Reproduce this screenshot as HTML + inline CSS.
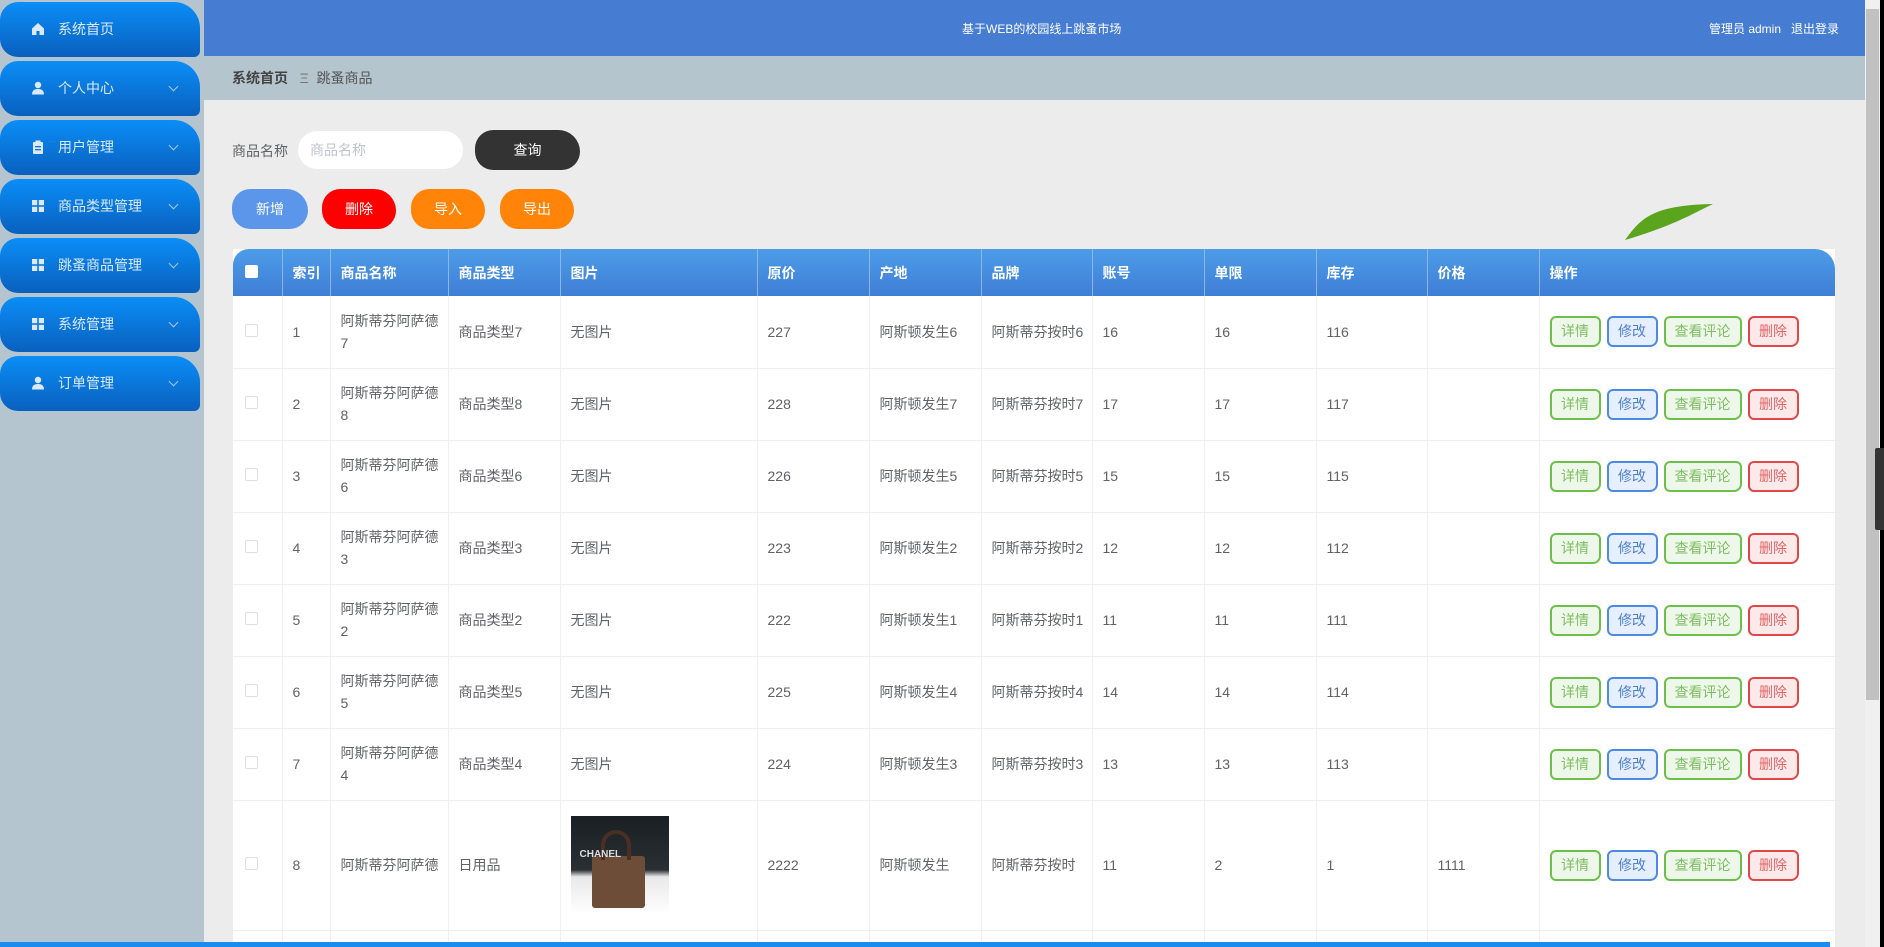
<!DOCTYPE html>
<html style="width:1884px;height:947px;overflow:hidden"><head><meta charset="utf-8"><style>
*{box-sizing:border-box;margin:0;padding:0}
body{width:1884px;height:947px;overflow:hidden;position:relative;background:#ececec;font-family:"Liberation Sans","Noto Sans CJK SC",sans-serif;font-size:14px;color:#606266}
.side{position:absolute;left:0;top:0;width:204px;height:947px;background:#b5c5cf}
.it{position:absolute;left:0;width:200px;height:55px;border-radius:18px 26px 6px 18px;background:linear-gradient(#0a8ef7,#0a60be);color:#dbe9f7;font-size:14px;line-height:55px;padding-left:58px}
.it .ic{position:absolute;left:31px;top:20px;width:14px;height:14px}
.it .ar{position:absolute;left:170px;top:22px;width:7px;height:7px;border-right:1.5px solid #a9c8ec;border-bottom:1.5px solid #a9c8ec;transform:rotate(45deg)}
.hd{position:absolute;left:204px;top:0;width:1661px;height:56px;background:#467cd2;color:#fff;font-size:12px}
.bc{position:absolute;left:204px;top:56px;width:1661px;height:44px;background:#b5c5cd;font-size:14px;line-height:44px;padding-left:28px;color:#555}
.btn{position:absolute;height:40px;line-height:40px;text-align:center;color:#fff;font-size:14px;border-radius:22px 26px 22px 22px}
.wrap{position:absolute;left:233px;top:249px;width:1602px;height:698px;overflow:hidden}
table{width:1602px;border-collapse:collapse;table-layout:fixed;background:#fff}
th{background:linear-gradient(#4d9ce8,#3f7ed6);color:#fff;height:47px;text-align:left;padding-left:10px;font-weight:bold;font-size:14px;border-right:1px solid #8bb6ea}
td{height:72px;padding:0 6px 0 10px;border-bottom:1px solid #ebeef5;border-right:1px solid #f0f0f0;font-size:14px;line-height:22px;white-space:nowrap;overflow:hidden;color:#606266}
.cb{display:inline-block;width:13px;height:13px;border:1px solid #dcdfe6;border-radius:2px;background:#fff;margin-left:2px}
.a{display:inline-block;height:31px;line-height:27px;border:2px solid;border-radius:6px 6px 8px 6px;font-size:14px;text-align:center;margin-right:6px;vertical-align:middle}
.g{border-color:#6cc04a;color:#7fbd62;background:#eef8ea}
.b{border-color:#4d8be0;color:#4d7fd0;background:#e6efff}
.r{border-color:#e04848;color:#e06565;background:#fde9e9}
</style></head><body>
<div class="side">
<div class="it" style="top:2px"><svg class="ic" viewBox="0 0 14 14"><path d="M7 1L1 6.5V13H5.5V9H8.5V13H13V6.5Z" fill="#dbe9f7"/></svg>系统首页</div>
<div class="it" style="top:61px"><svg class="ic" viewBox="0 0 14 14"><circle cx="7" cy="4" r="3.2" fill="#dbe9f7"/><path d="M1 13.5C1 9 4 8 7 8S13 9 13 13.5Z" fill="#dbe9f7"/></svg>个人中心<i class="ar"></i></div>
<div class="it" style="top:120px"><svg class="ic" viewBox="0 0 14 14"><rect x="2" y="2" width="10" height="12" rx="1" fill="#dbe9f7"/><rect x="4.5" y="0.5" width="5" height="3" fill="#dbe9f7"/><rect x="4" y="6" width="6" height="1.3" fill="#1270d0"/><rect x="4" y="9" width="6" height="1.3" fill="#1270d0"/></svg>用户管理<i class="ar"></i></div>
<div class="it" style="top:179px"><svg class="ic" viewBox="0 0 14 14"><rect x="1" y="1" width="5.2" height="5.2" fill="#dbe9f7"/><rect x="7.8" y="1" width="5.2" height="5.2" fill="#dbe9f7"/><rect x="1" y="7.8" width="5.2" height="5.2" fill="#dbe9f7"/><rect x="7.8" y="7.8" width="5.2" height="5.2" fill="#dbe9f7"/></svg>商品类型管理<i class="ar"></i></div>
<div class="it" style="top:238px"><svg class="ic" viewBox="0 0 14 14"><rect x="1" y="1" width="5.2" height="5.2" fill="#dbe9f7"/><rect x="7.8" y="1" width="5.2" height="5.2" fill="#dbe9f7"/><rect x="1" y="7.8" width="5.2" height="5.2" fill="#dbe9f7"/><rect x="7.8" y="7.8" width="5.2" height="5.2" fill="#dbe9f7"/></svg>跳蚤商品管理<i class="ar"></i></div>
<div class="it" style="top:297px"><svg class="ic" viewBox="0 0 14 14"><rect x="1" y="1" width="5.2" height="5.2" fill="#dbe9f7"/><rect x="7.8" y="1" width="5.2" height="5.2" fill="#dbe9f7"/><rect x="1" y="7.8" width="5.2" height="5.2" fill="#dbe9f7"/><rect x="7.8" y="7.8" width="5.2" height="5.2" fill="#dbe9f7"/></svg>系统管理<i class="ar"></i></div>
<div class="it" style="top:356px"><svg class="ic" viewBox="0 0 14 14"><circle cx="7" cy="4" r="3.2" fill="#dbe9f7"/><path d="M1 13.5C1 9 4 8 7 8S13 9 13 13.5Z" fill="#dbe9f7"/></svg>订单管理<i class="ar"></i></div>
</div>
<div class="hd"><span style="position:absolute;left:758px;top:20px">基于WEB的校园线上跳蚤市场</span><span style="position:absolute;left:1505px;top:20px">管理员 admin&nbsp;&nbsp;&nbsp;退出登录</span></div>
<div class="bc"><b style="color:#444">系统首页</b>&nbsp;&nbsp; <span style="color:#777">Ξ</span> &nbsp;跳蚤商品</div>
<svg style="position:absolute;left:1620px;top:200px" width="100" height="45"><path d="M5 40C20 20 30 5 93 4C70 15 55 25 5 40Z" fill="#5aa51d"/></svg>
<span style="position:absolute;left:232px;top:141px;font-size:14px">商品名称</span>
<div style="position:absolute;left:298px;top:131px;width:165px;height:38px;background:#fff;border-radius:20px;color:#c0c4cc;padding-left:12px;line-height:38px">商品名称</div>
<div class="btn" style="left:475px;top:130px;width:105px;background:#333">查询</div>
<div class="btn" style="left:232px;top:189px;width:76px;background:#5b96ea">新增</div>
<div class="btn" style="left:322px;top:189px;width:74px;background:#ff0000">删除</div>
<div class="btn" style="left:411px;top:189px;width:74px;background:#ff8408">导入</div>
<div class="btn" style="left:500px;top:189px;width:74px;background:#ff8408">导出</div>
<div class="wrap">
<table>
<colgroup><col style="width:49px"><col style="width:48px"><col style="width:118px"><col style="width:112px"><col style="width:197px"><col style="width:112px"><col style="width:112px"><col style="width:111px"><col style="width:112px"><col style="width:112px"><col style="width:111px"><col style="width:112px"><col style="width:296px"></colgroup>
<tr><th style="border-radius:16px 0 0 0"><span class="cb" style="border:none"></span></th><th>索引</th><th>商品名称</th><th>商品类型</th><th>图片</th><th>原价</th><th>产地</th><th>品牌</th><th>账号</th><th>单限</th><th>库存</th><th>价格</th><th style="border-radius:0 20px 0 0;border-right:none">操作</th></tr>
<tr><td><span class="cb"></span></td><td>1</td><td>阿斯蒂芬阿萨德<br>7</td><td>商品类型7</td><td>无图片</td><td>227</td><td>阿斯顿发生6</td><td>阿斯蒂芬按时6</td><td>16</td><td>16</td><td>116</td><td></td><td><span class="a g" style="width:51px">详情</span><span class="a b" style="width:51px">修改</span><span class="a g" style="width:78px">查看评论</span><span class="a r" style="width:51px">删除</span></td></tr>
<tr><td><span class="cb"></span></td><td>2</td><td>阿斯蒂芬阿萨德<br>8</td><td>商品类型8</td><td>无图片</td><td>228</td><td>阿斯顿发生7</td><td>阿斯蒂芬按时7</td><td>17</td><td>17</td><td>117</td><td></td><td><span class="a g" style="width:51px">详情</span><span class="a b" style="width:51px">修改</span><span class="a g" style="width:78px">查看评论</span><span class="a r" style="width:51px">删除</span></td></tr>
<tr><td><span class="cb"></span></td><td>3</td><td>阿斯蒂芬阿萨德<br>6</td><td>商品类型6</td><td>无图片</td><td>226</td><td>阿斯顿发生5</td><td>阿斯蒂芬按时5</td><td>15</td><td>15</td><td>115</td><td></td><td><span class="a g" style="width:51px">详情</span><span class="a b" style="width:51px">修改</span><span class="a g" style="width:78px">查看评论</span><span class="a r" style="width:51px">删除</span></td></tr>
<tr><td><span class="cb"></span></td><td>4</td><td>阿斯蒂芬阿萨德<br>3</td><td>商品类型3</td><td>无图片</td><td>223</td><td>阿斯顿发生2</td><td>阿斯蒂芬按时2</td><td>12</td><td>12</td><td>112</td><td></td><td><span class="a g" style="width:51px">详情</span><span class="a b" style="width:51px">修改</span><span class="a g" style="width:78px">查看评论</span><span class="a r" style="width:51px">删除</span></td></tr>
<tr><td><span class="cb"></span></td><td>5</td><td>阿斯蒂芬阿萨德<br>2</td><td>商品类型2</td><td>无图片</td><td>222</td><td>阿斯顿发生1</td><td>阿斯蒂芬按时1</td><td>11</td><td>11</td><td>111</td><td></td><td><span class="a g" style="width:51px">详情</span><span class="a b" style="width:51px">修改</span><span class="a g" style="width:78px">查看评论</span><span class="a r" style="width:51px">删除</span></td></tr>
<tr><td><span class="cb"></span></td><td>6</td><td>阿斯蒂芬阿萨德<br>5</td><td>商品类型5</td><td>无图片</td><td>225</td><td>阿斯顿发生4</td><td>阿斯蒂芬按时4</td><td>14</td><td>14</td><td>114</td><td></td><td><span class="a g" style="width:51px">详情</span><span class="a b" style="width:51px">修改</span><span class="a g" style="width:78px">查看评论</span><span class="a r" style="width:51px">删除</span></td></tr>
<tr><td><span class="cb"></span></td><td>7</td><td>阿斯蒂芬阿萨德<br>4</td><td>商品类型4</td><td>无图片</td><td>224</td><td>阿斯顿发生3</td><td>阿斯蒂芬按时3</td><td>13</td><td>13</td><td>113</td><td></td><td><span class="a g" style="width:51px">详情</span><span class="a b" style="width:51px">修改</span><span class="a g" style="width:78px">查看评论</span><span class="a r" style="width:51px">删除</span></td></tr>
<tr><td style="height:130px"><span class="cb"></span></td><td>8</td><td>阿斯蒂芬阿萨德</td><td>日用品</td><td><div style="width:98px;height:98px;background:linear-gradient(#1a1f24 0%,#2a2f33 55%,#e8e8e8 62%,#fff 100%);position:relative;overflow:hidden"><div style="position:absolute;left:21px;top:40px;width:53px;height:52px;background:#6e4d38;border-radius:3px"></div><div style="position:absolute;left:30px;top:14px;width:30px;height:30px;border:4px solid #4a3024;border-radius:15px 15px 0 0;border-bottom:none"></div><span style="position:absolute;left:9px;top:28px;color:#ddd;font-size:10px;font-weight:bold">CHANEL</span></div></td><td>2222</td><td>阿斯顿发生</td><td>阿斯蒂芬按时</td><td>11</td><td>2</td><td>1</td><td>1111</td><td><span class="a g" style="width:51px">详情</span><span class="a b" style="width:51px">修改</span><span class="a g" style="width:78px">查看评论</span><span class="a r" style="width:51px">删除</span></td></tr>
<tr><td></td><td></td><td></td><td></td><td><div style="width:98px;height:10px;background:#c9a89a"></div></td><td></td><td></td><td></td><td></td><td></td><td></td><td></td><td></td></tr>
</table>
</div>
<div style="position:absolute;left:0;top:942px;width:1830px;height:5px;background:#1a8cf0"></div>
<div style="position:absolute;left:1865px;top:0;width:15px;height:947px;background:#f0f0f0"></div>
<div style="position:absolute;left:1866px;top:9px;width:13px;height:691px;background:#c1c1c1"></div>
<div style="position:absolute;left:1880px;top:0;width:4px;height:947px;background:#000"></div>
<div style="position:absolute;left:1875px;top:448px;width:9px;height:82px;background:#333;border-radius:2px 0 0 2px"></div>
</body></html>
